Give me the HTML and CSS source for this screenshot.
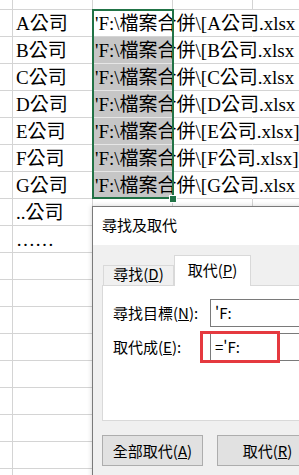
FILE: index.html
```html
<!DOCTYPE html>
<html lang="zh-Hant">
<head>
<meta charset="utf-8">
<title>尋找及取代</title>
<link rel="stylesheet" href="styles.css">
</head>
<body>
<div class="sheet">
  <div class="row"><div class="c"></div><div class="c"></div><div class="c"></div><div class="c"></div><div class="c"></div></div>
  <div class="row"><div class="c"></div><div class="c">A公司</div><div class="c b over">'F:\檔案合併\[A公司.xlsx</div><div class="c nob"></div><div class="c"></div></div>
  <div class="row"><div class="c"></div><div class="c">B公司</div><div class="c b over sel">'F:\檔案合併\[B公司.xlsx</div><div class="c nob"></div><div class="c"></div></div>
  <div class="row"><div class="c"></div><div class="c">C公司</div><div class="c b over sel">'F:\檔案合併\[C公司.xlsx</div><div class="c nob"></div><div class="c"></div></div>
  <div class="row"><div class="c"></div><div class="c">D公司</div><div class="c b over sel">'F:\檔案合併\[D公司.xlsx</div><div class="c nob"></div><div class="c"></div></div>
  <div class="row"><div class="c"></div><div class="c">E公司</div><div class="c b over sel">'F:\檔案合併\[E公司.xlsx]</div><div class="c nob"></div><div class="c"></div></div>
  <div class="row"><div class="c"></div><div class="c">F公司</div><div class="c b over sel">'F:\檔案合併\[F公司.xlsx]</div><div class="c nob"></div><div class="c"></div></div>
  <div class="row"><div class="c"></div><div class="c">G公司</div><div class="c b over sel">'F:\檔案合併\[G公司.xlsx</div><div class="c nob"></div><div class="c"></div></div>
  <div class="row"><div class="c"></div><div class="c">..公司</div><div class="c"></div><div class="c"></div><div class="c"></div></div>
  <div class="row"><div class="c"></div><div class="c">……</div><div class="c"></div><div class="c"></div><div class="c"></div></div>
  <div class="row"><div class="c"></div><div class="c"></div><div class="c"></div><div class="c"></div><div class="c"></div></div>
  <div class="row"><div class="c"></div><div class="c"></div><div class="c"></div><div class="c"></div><div class="c"></div></div>
  <div class="row"><div class="c"></div><div class="c"></div><div class="c"></div><div class="c"></div><div class="c"></div></div>
  <div class="row"><div class="c"></div><div class="c"></div><div class="c"></div><div class="c"></div><div class="c"></div></div>
  <div class="row"><div class="c"></div><div class="c"></div><div class="c"></div><div class="c"></div><div class="c"></div></div>
  <div class="row"><div class="c"></div><div class="c"></div><div class="c"></div><div class="c"></div><div class="c"></div></div>
  <div class="row"><div class="c"></div><div class="c"></div><div class="c"></div><div class="c"></div><div class="c"></div></div>
  <div class="row"><div class="c"></div><div class="c"></div><div class="c"></div><div class="c"></div><div class="c"></div></div>
  <div class="row"><div class="c"></div><div class="c"></div><div class="c"></div><div class="c"></div><div class="c"></div></div>
</div>
<div class="selection"></div>
<div class="handle"></div>

<div class="dialog">
  <div class="titlebar">尋找及取代</div>
  <div class="dbody">
    <div class="tabs">
      <div class="tab">尋找(<u>D</u>)</div>
      <div class="tab active">取代(<u>P</u>)</div>
    </div>
    <div class="panel">
      <div class="frow">
        <div class="label">尋找目標(<u>N</u>):</div>
        <div class="input">'F:</div>
      </div>
      <div class="frow frow2">
        <div class="label">取代成(<u>E</u>):</div>
        <div class="input">='F:</div>
        <div class="mark"></div>
      </div>
    </div>
    <div class="buttons">
      <div class="btn btn-all">全部取代(<u>A</u>)</div>
      <div class="btn btn-one">取代(<u>R</u>)</div>
    </div>
  </div>
</div>
</body>
</html>
```
FILE: styles.css
```css
html, body {
  margin: 0;
  padding: 0;
  background: #ffffff;
}
body {
  width: 299px;
  height: 475px;
  overflow: hidden;
  position: relative;
}
.sheet {
  margin-top: -17px;
  margin-left: -67px;
  font-family: "Liberation Serif", "Noto Sans CJK TC", serif;
  font-size: 19px;
  color: #000;
}
.row {
  display: flex;
  height: 27px;
}
.c {
  box-sizing: border-box;
  flex: 0 0 80px;
  width: 80px;
  height: 27px;
  border-right: 1px solid #d4d4d4;
  border-bottom: 1px solid #d4d4d4;
  display: flex;
  align-items: flex-end;
  padding: 0 0 1px 3px;
  line-height: 22px;
  white-space: nowrap;
  overflow: visible;
}
.c.b {
  padding-left: 2px;
}
.over, .nob {
  border-right-color: transparent;
}
.sel {
  background: #c6c6c6;
  border-bottom-color: #e6e6e6;
}
.selection {
  position: absolute;
  left: 92px;
  top: 9px;
  width: 82px;
  height: 190px;
  box-sizing: border-box;
  border: 2px solid #217346;
}
.handle {
  position: absolute;
  left: 169px;
  top: 195px;
  width: 6px;
  height: 6px;
  background: #217346;
  border: 1px solid #ffffff;
}
.dialog {
  position: absolute;
  left: 92px;
  top: 206px;
  width: 240px;
  height: 300px;
  border: 1px solid #7a7a7a;
  background: #f0f0f0;
  box-shadow: 0 0 5px rgba(0, 0, 0, 0.18);
  font-family: "Noto Sans CJK TC", "Noto Sans", sans-serif;
  font-size: 15px;
  color: #000;
}
.titlebar {
  height: 38px;
  line-height: 36px;
  background: #ffffff;
  padding-left: 9px;
}
.dbody {
  padding: 10px 0 0 9px;
}
.tabs {
  display: flex;
  align-items: flex-end;
  height: 30px;
}
.tab {
  box-sizing: border-box;
  height: 20px;
  width: 71px;
  margin-left: 1px;
  border: 1px solid #d9d9d9;
  border-bottom: none;
  text-align: center;
  line-height: 16px;
  background: #f0f0f0;
}
.tab.active {
  height: 31px;
  width: 77px;
  margin-left: 0;
  margin-bottom: -1px;
  background: #ffffff;
  line-height: 28px;
  position: relative;
}
.panel {
  box-sizing: border-box;
  height: 136px;
  background: #ffffff;
  border: 1px solid #d9d9d9;
  border-right: none;
  padding: 13px 0 0 10px;
}
.frow {
  display: flex;
  align-items: center;
  height: 28px;
}
.frow2 {
  margin-top: 6px;
  position: relative;
}
.label {
  width: 97px;
  flex: 0 0 97px;
  line-height: 20px;
}
.input {
  box-sizing: border-box;
  flex: 1;
  height: 28px;
  border: 1px solid #7a7a7a;
  border-right: none;
  background: #ffffff;
  padding-left: 4px;
  line-height: 26px;
}
.mark {
  position: absolute;
  left: 87px;
  top: -2px;
  width: 80px;
  height: 32px;
  box-sizing: border-box;
  border: 3px solid #e5393f;
}
.buttons {
  display: flex;
  gap: 14px;
  margin-top: 14px;
}
.btn {
  box-sizing: border-box;
  height: 31px;
  width: 101px;
  border: 1px solid #adadad;
  background: #e1e1e1;
  text-align: center;
  line-height: 29px;
}
```
